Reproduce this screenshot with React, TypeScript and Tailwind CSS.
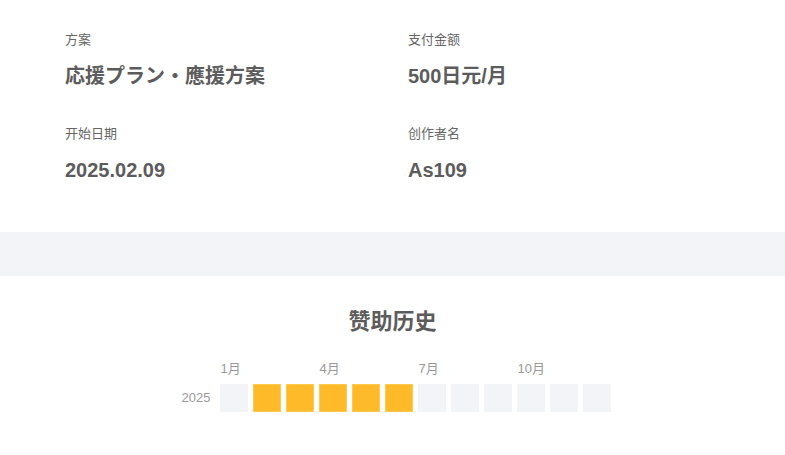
import React from 'react';

const font = { fontFamily: '"Liberation Sans", "Noto Sans CJK SC", sans-serif' };

const info = [
  { label: '方案', value: '応援プラン・應援方案' },
  { label: '支付金额', value: '500日元/月' },
  { label: '开始日期', value: '2025.02.09' },
  { label: '创作者名', value: 'As109' },
];

// months with a sponsorship (1-based)
const paid = [2, 3, 4, 5, 6];
const monthLabels: Record<number, string> = { 1: '1月', 4: '4月', 7: '7月', 10: '10月' };

export default function App() {
  return (
    <main className="w-full bg-white" style={font}>
      {/* Plan details */}
      <section className="px-[65px] pt-[31px] pb-[48px]">
        <div className="grid grid-cols-[343px_1fr] gap-y-[35px]">
          {info.map((item) => (
            <div key={item.label} className="flex flex-col gap-[13px]">
              <span className="text-[13px] leading-[18px] text-[#666666]">{item.label}</span>
              <span className="text-[20px] leading-[28px] font-bold text-[#5c5c5c]">{item.value}</span>
            </div>
          ))}
        </div>
      </section>

      {/* Divider band */}
      <div className="h-[44px] bg-[#f3f4f8]" />

      {/* Sponsorship history */}
      <section className="pt-[31px] pb-[40px] flex flex-col items-center">
        <h2 className="text-[22px] leading-[30px] font-bold text-[#5c5c5c]">赞助历史</h2>
        <div className="mt-[24px] pl-[7px] flex justify-center">
          <div className="flex flex-col gap-[7px]">
            <div className="flex">
              <div className="w-[40px] shrink-0" />
              <div className="grid grid-cols-[repeat(12,28px)] gap-x-[5px]">
                {Array.from({ length: 12 }, (_, i) => (
                  <span key={i} className="text-[13px] leading-[16px] text-[#999999] whitespace-nowrap">
                    {monthLabels[i + 1] ?? ''}
                  </span>
                ))}
              </div>
            </div>
            <div className="flex items-center">
              <span className="w-[30px] mr-[9px] shrink-0 text-right text-[13px] leading-[16px] text-[#999999]">
                2025
              </span>
              <div className="grid grid-cols-[repeat(12,28px)] gap-x-[5px]">
                {Array.from({ length: 12 }, (_, i) =>
                  paid.includes(i + 1) ? (
                    <div key={i} className="h-[28px] bg-[#ffba2a] border border-[#ffc94f]" />
                  ) : (
                    <div key={i} className="h-[28px] bg-[#f3f4f8]" />
                  )
                )}
              </div>
            </div>
          </div>
        </div>
      </section>
    </main>
  );
}
